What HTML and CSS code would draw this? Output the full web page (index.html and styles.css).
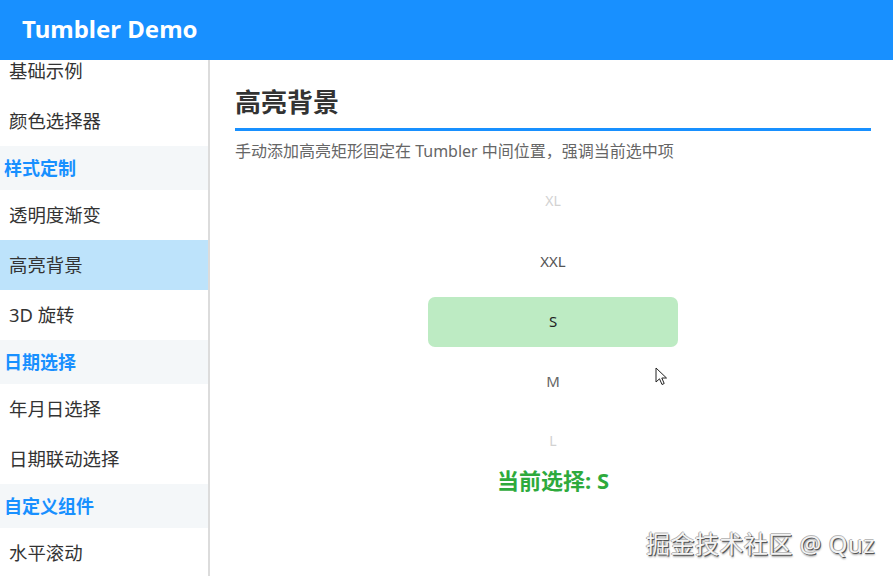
FILE: index.html
```html
<!DOCTYPE html>
<html lang="zh-CN">
<head>
    <meta charset="UTF-8">
    <meta name="viewport" content="width=device-width, initial-scale=1.0">
    <title>Tumbler Demo</title>
    <link rel="stylesheet" href="styles.css">
</head>
<body>
    <header class="topbar">Tumbler Demo</header>
    <div class="layout">
        <nav class="sidebar" id="sidebar">
            <div class="item">基础示例</div>
            <div class="item">颜色选择器</div>
            <div class="group">样式定制</div>
            <div class="item">透明度渐变</div>
            <div class="item active">高亮背景</div>
            <div class="item">3D 旋转</div>
            <div class="group">日期选择</div>
            <div class="item">年月日选择</div>
            <div class="item">日期联动选择</div>
            <div class="group">自定义组件</div>
            <div class="item">水平滚动</div>
        </nav>
        <main class="content">
            <h2 class="title">高亮背景</h2>
            <p class="desc">手动添加高亮矩形固定在 Tumbler 中间位置，强调当前选中项</p>
            <div class="tumbler">
                <div class="highlight"></div>
                <div class="opt far">XL</div>
                <div class="opt near">XXL</div>
                <div class="opt current">S</div>
                <div class="opt near2">M</div>
                <div class="opt far">L</div>
            </div>
            <div class="result">当前选择: S</div>
        </main>
    </div>

    <!-- mouse pointer hovering near the list -->
    <svg class="pointer" width="14" height="20" viewBox="0 0 14 20">
        <path d="M1 1 L1 15 L4.5 11.8 L7 17.5 L9.2 16.5 L6.8 11 L11.5 11 Z" fill="#fff" stroke="#222" stroke-width="1" stroke-linejoin="round"/>
    </svg>

    <div class="watermark">掘金技术社区 @ Quz</div>

    <script>
        // keep the menu scrolled a little, as after the user scrolled it
        document.getElementById("sidebar").scrollTop = 14;
    </script>
</body>
</html>
```

FILE: styles.css
```css
* {
    margin: 0;
    padding: 0;
    box-sizing: border-box;
    font-family: "Noto Sans", "Noto Sans CJK SC", sans-serif;
}
body {
    width: 893px;
    height: 576px;
    overflow: hidden;
    background: #fff;
}
.topbar {
    height: 60px;
    background: #1890ff;
    color: #fff;
    font-size: 24px;
    font-weight: bold;
    line-height: 58px;
    padding-left: 22px;
}
.layout {
    display: flex;
    height: 516px;
}
.sidebar {
    width: 210px;
    flex-shrink: 0;
    border-right: 2px solid #dcdcdc;
    overflow: hidden;
}
.group {
    height: 44px;
    line-height: 44px;
    padding-left: 4px;
    background: #f4f7f9;
    color: #1890ff;
    font-size: 18px;
    font-weight: bold;
}
.item {
    height: 50px;
    line-height: 50px;
    padding-left: 9px;
    color: #333;
    font-size: 18.4px;
}
.item.active {
    background: #bde3fb;
}
.content {
    flex: 1;
    padding: 22px 22px 0 25px;
}
.title {
    font-size: 26px;
    font-weight: bold;
    color: #333;
    line-height: 40px;
    padding-bottom: 6px;
    border-bottom: 3px solid #1890ff;
}
.desc {
    margin-top: 9px;
    font-size: 16px;
    color: #666;
    line-height: 22px;
}
.tumbler {
    position: relative;
    width: 250px;
    margin: 9px auto 0;
    display: flex;
    flex-direction: column;
}
.highlight {
    position: absolute;
    left: 0;
    right: 0;
    top: 126px;
    height: 50px;
    background: #bdebc3;
    border-radius: 7px;
}
.opt {
    position: relative;
    height: 60px;
    line-height: 60px;
    text-align: center;
    font-size: 15px;
}
.opt.far { color: #d2d2d2; font-size: 14px; }
.opt.near { color: #555; }
.opt.near2 { color: #666; }
.opt.current { color: #222; }
.result {
    margin-top: -4px;
    text-align: center;
    color: #2eaa3c;
    font-size: 22px;
    font-weight: bold;
    line-height: 26px;
}
.pointer {
    position: absolute;
    left: 655px;
    top: 367px;
}
.watermark {
    position: absolute;
    right: 18px;
    top: 525px;
    font-size: 24px;
    color: #f4f4f4;
    letter-spacing: 0.5px;
    text-shadow: 1px 1px 0 #555, -1px 0 0 #aaa, 0 -1px 0 #bbb, 1px 2px 2px rgba(0, 0, 0, 0.4);
}
```
